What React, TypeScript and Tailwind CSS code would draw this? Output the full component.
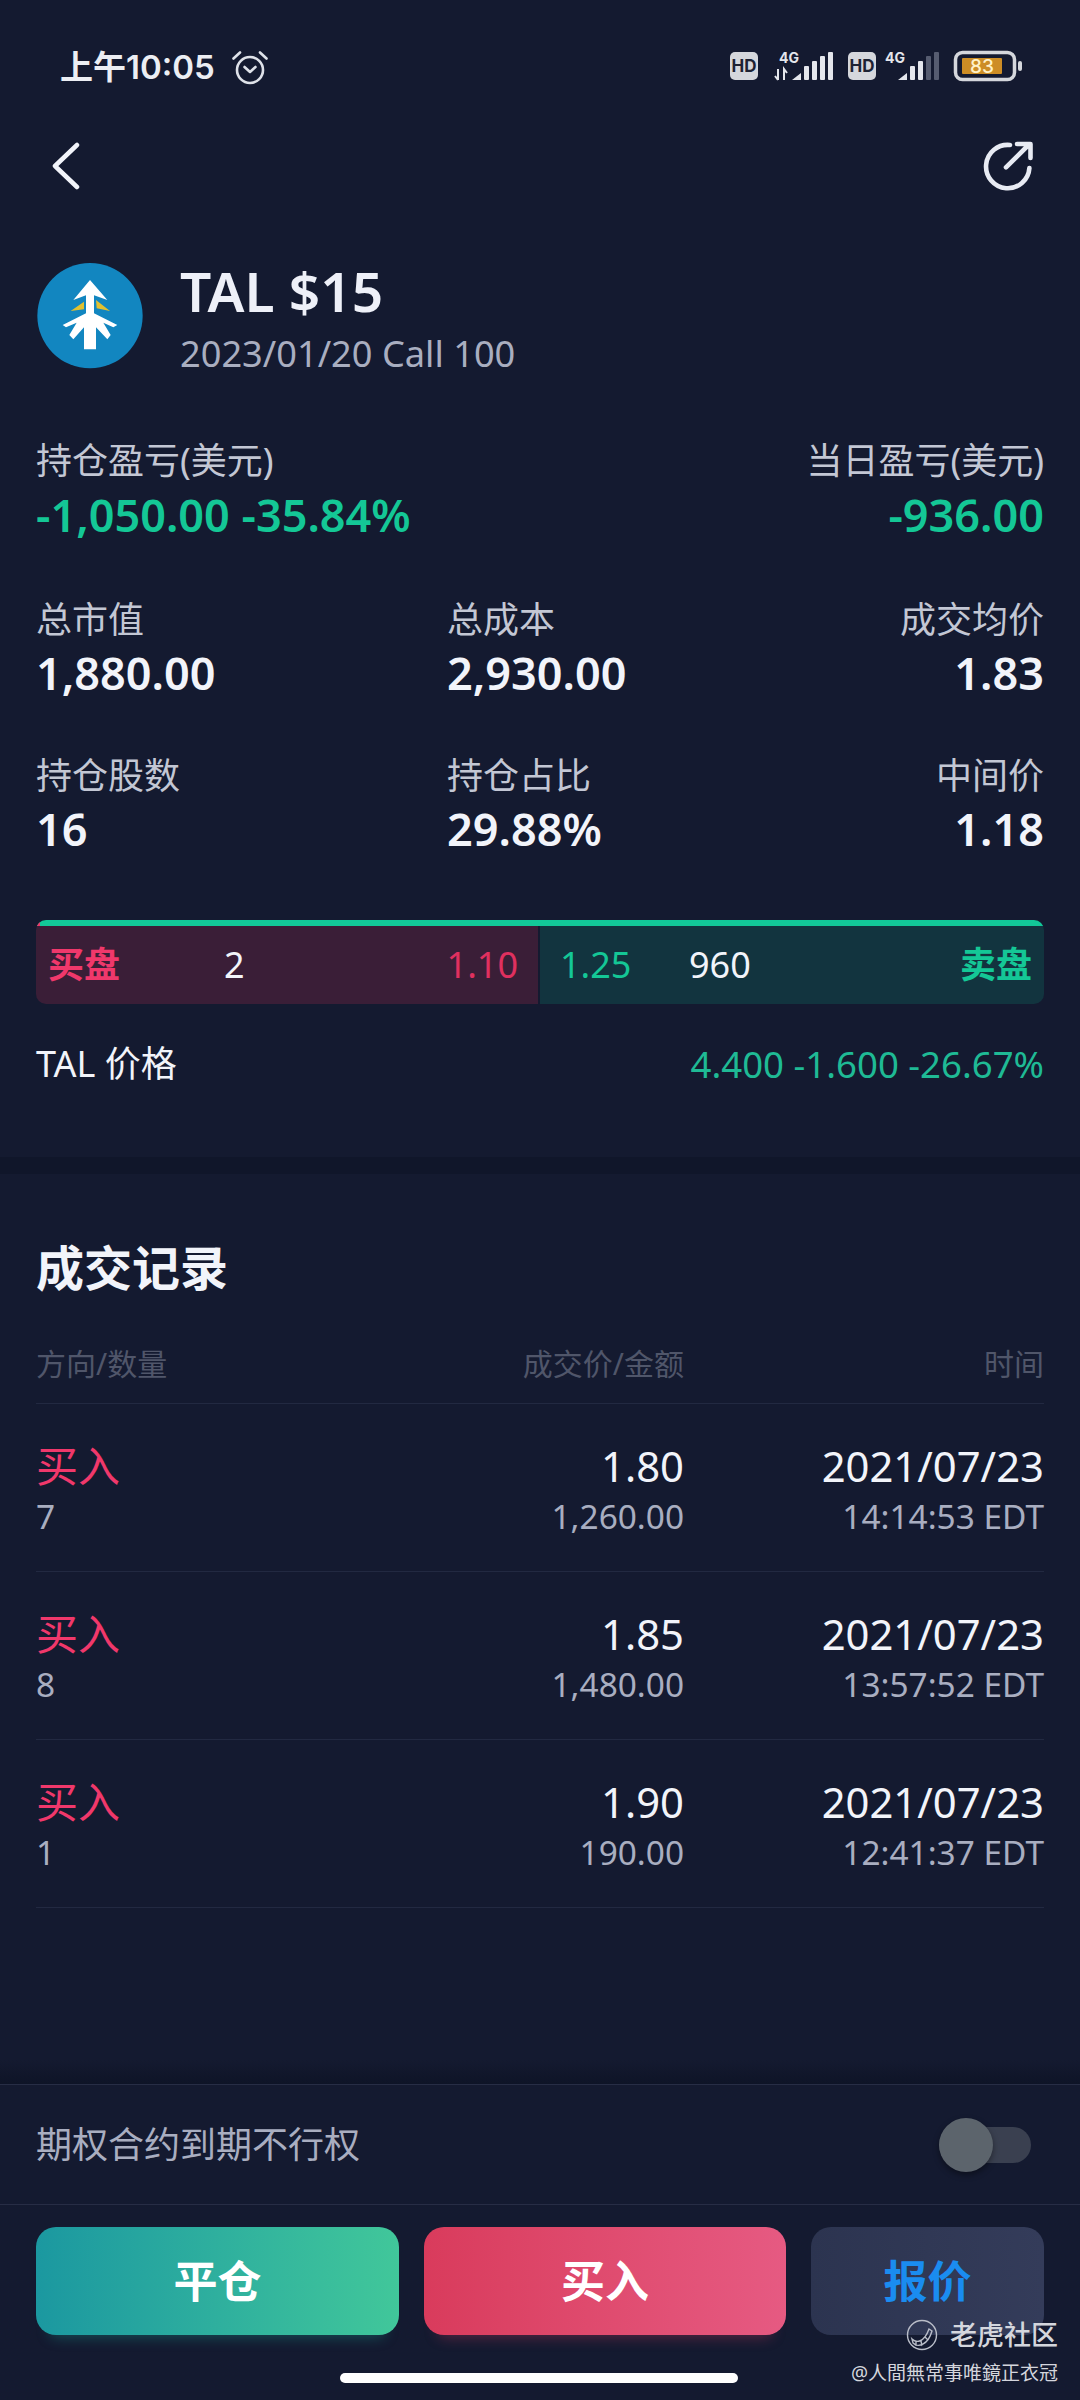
import React from 'react'

const trades = [
  { side: '买入', qty: '7', price: '1.80', amount: '1,260.00', date: '2021/07/23', time: '14:14:53 EDT' },
  { side: '买入', qty: '8', price: '1.85', amount: '1,480.00', date: '2021/07/23', time: '13:57:52 EDT' },
  { side: '买入', qty: '1', price: '1.90', amount: '190.00', date: '2021/07/23', time: '12:41:37 EDT' },
]

const stats = [
  [
    { label: '总市值', value: '1,880.00' },
    { label: '总成本', value: '2,930.00' },
    { label: '成交均价', value: '1.83' },
  ],
  [
    { label: '持仓股数', value: '16' },
    { label: '持仓占比', value: '29.88%' },
    { label: '中间价', value: '1.18' },
  ],
]

const Signal = (props: { dim?: boolean }) => {
  return (
    <g fill="#e4e6ec">
      <path d="M0 28 L9 21 V28 Z" />
      <rect x="12" y="14" width="5" height="14" rx="1" />
      <rect x="20" y="9" width="5" height="19" rx="1" />
      <rect x="28" y="4" width="5" height="24" rx="1" fill={props.dim ? '#565c70' : '#e4e6ec'} />
      <rect x="36" y="0" width="5" height="28" rx="1" fill={props.dim ? '#565c70' : '#e4e6ec'} />
    </g>
  )
}

const HdBadge = (props: { x: number }) => {
  return (
    <g transform={`translate(${props.x} 0)`}>
      <rect x="0" y="2" width="28" height="28" rx="5" fill="#d5d7dc" />
      <text x="14" y="22" textAnchor="middle" fontSize="17" fontWeight="700" fill="#1d2233" fontFamily="Inter, sans-serif">HD</text>
    </g>
  )
}

const StatusIcons = () => {
  return (
    <svg width="296" height="36" viewBox="0 0 296 36" fill="none">
      <HdBadge x={0} />
      <text x="49" y="13" fontSize="14" fontWeight="700" fill="#e4e6ec" fontFamily="Inter, sans-serif">4G</text>
      <path d="M48 19 V30 M45 26 L48 30 M54 30 V19 L57 23" stroke="#e4e6ec" strokeWidth="2" />
      <g transform="translate(62 2)"><Signal /></g>
      <HdBadge x={118} />
      <text x="155" y="13" fontSize="14" fontWeight="700" fill="#e4e6ec" fontFamily="Inter, sans-serif">4G</text>
      <g transform="translate(168 2)"><Signal dim /></g>
      <rect x="225.5" y="2.5" width="59" height="27" rx="7" stroke="#d5d7dc" strokeWidth="3.5" />
      <rect x="232" y="8" width="40" height="16" rx="1" fill="#cd8d25" />
      <text x="252" y="23" textAnchor="middle" fontSize="19" fontWeight="500" fill="#fff2c8" fontFamily="Inter, sans-serif">83</text>
      <rect x="288" y="11" width="4" height="10" rx="2" fill="#d5d7dc" />
    </svg>
  )
}

const AlarmIcon = () => {
  return (
    <svg width="36" height="36" viewBox="0 0 36 36" fill="none" stroke="#dfe2e9" strokeWidth="2.6" strokeLinecap="round" strokeLinejoin="round">
      <circle cx="18" cy="20" r="13" />
      <path d="M12.5 17 L18 22 L23.5 17" />
      <path d="M1.5 8.5 L8 2.5 M34.5 8.5 L28 2.5" />
    </svg>
  )
}

const TreeLogo = () => {
  return (
    <svg width="106" height="106" viewBox="51 39 318 318" className="shrink-0">
      <circle cx="210" cy="197" r="158" fill="#1286c0" />
      <path d="M210 90 L262 150 L222 136 L222 190 L292 225 L280 232 L250 218 L272 255 L262 268 L228 232 L228 298 L192 298 L192 232 L160 268 L148 255 L170 218 L138 232 L128 225 L198 190 L198 136 L160 150 Z" fill="#fff" />
      <path d="M152 183 L192 155 L192 178 Z M228 150 L270 183 L230 175 Z" fill="#e2c12f" />
    </svg>
  )
}

const App = () => {
  return (
    <div className="relative flex h-[2400px] w-[1080px] flex-col overflow-hidden bg-[#141a30] font-['Noto_Sans','Noto_Sans_CJK_SC',sans-serif] text-[#f2f4fa]">
      {/* status bar */}
      <div className="flex h-[130px] shrink-0 items-center justify-between pt-[5px] pl-[60px] pr-[54px]">
        <div className="flex items-center gap-[17px]">
          <span className="font-['Inter','Noto_Sans_CJK_SC',sans-serif] text-[33px] font-semibold text-[#eceef3]">上午10:05</span>
          <AlarmIcon />
        </div>
        <StatusIcons />
      </div>

      {/* nav */}
      <div className="flex h-[72px] shrink-0 items-center justify-between pl-[50px] pr-[46px]">
        <svg width="32" height="48" viewBox="0 0 32 48" fill="none" stroke="#f2f4fa" strokeWidth="4.5" strokeLinecap="round" strokeLinejoin="round">
          <path d="M27 3 L5 24 L27 45" />
        </svg>
        <svg width="52" height="52" viewBox="0 0 52 52" fill="none" stroke="#e8ebf3" strokeWidth="4.6" strokeLinecap="round" strokeLinejoin="round">
          <path d="M28 5 A21.7 21.7 0 1 0 47.4 28" />
          <path d="M24 27.3 L46 5.5 M35 4 H48.5 V18" />
        </svg>
      </div>

      {/* contract */}
      <div className="mt-[61px] flex h-[106px] shrink-0 items-center gap-[37px] px-[37px]">
        <TreeLogo />
        <div className="flex flex-col pt-[3px]">
          <span className="text-[55px] leading-[62px] font-semibold text-[#eef0f8]">TAL $15</span>
          <span className="mt-[8px] text-[36.2px] leading-[46px] text-[#a9aec0]">2023/01/20 Call 100</span>
        </div>
      </div>

      {/* P&L */}
      <div className="mt-[67px] flex shrink-0 justify-between px-[36px]">
        <div className="flex flex-col">
          <span className="text-[36px] leading-[50px] text-[#c3c7d4]">持仓盈亏(美元)</span>
          <span className="text-[45px] leading-[58px] font-semibold text-[#14c796]">-1,050.00 -35.84%</span>
        </div>
        <div className="flex flex-col items-end">
          <span className="text-[36px] leading-[50px] text-[#c3c7d4]">当日盈亏(美元)</span>
          <span className="text-[45px] leading-[58px] font-semibold text-[#14c796]">-936.00</span>
        </div>
      </div>

      <div className="mt-[51px] flex shrink-0 flex-col gap-[50px] px-[36px]">
        {stats.map((row) => (
          <div key={row[0].label} className="grid grid-cols-[411px_1fr_auto]">
            {row.map((cell, i) => (
              <div key={cell.label} className={i === 2 ? 'flex flex-col items-end' : 'flex flex-col'}>
                <span className="text-[36px] leading-[50px] text-[#c3c7d4]">{cell.label}</span>
                <span className="text-[45px] leading-[56px] font-semibold">{cell.value}</span>
              </div>
            ))}
          </div>
        ))}
      </div>

      {/* bid / ask */}
      <div className="mx-[36px] mt-[63px] flex h-[84px] shrink-0 flex-col overflow-hidden rounded-[10px]">
        <div className="flex h-[6px] shrink-0 bg-[#12c898]">
          <div className="w-[4px] bg-[#f0386b]" />
        </div>
        <div className="flex flex-1">
          <div className="flex w-[504px] items-center border-r-2 border-[#141a30] bg-[#3a1e37] pl-[12px] pr-[20px]">
            <span className="w-[176px] text-[36px] font-bold text-[#f0386b]">买盘</span>
            <span className="text-[36px] text-[#f2f4fa]">2</span>
            <span className="ml-auto text-[36px] text-[#e0305f]">1.10</span>
          </div>
          <div className="flex flex-1 items-center bg-[#12343f] pl-[20px] pr-[12px]">
            <span className="w-[129px] text-[36px] text-[#14c796]">1.25</span>
            <span className="text-[36px] text-[#f2f4fa]">960</span>
            <span className="ml-auto text-[36px] font-bold text-[#14c796]">卖盘</span>
          </div>
        </div>
      </div>

      <div className="mt-[35px] flex shrink-0 items-center justify-between px-[36px] text-[36.6px] leading-[50px]">
        <span className="text-[36px] text-[#f2f4fa]">TAL 价格</span>
        <span className="text-[#1fba95]">4.400 -1.600 -26.67%</span>
      </div>

      <div className="mt-[68px] h-[17px] shrink-0 bg-[#10162a]" />

      {/* trades */}
      <div className="mt-[62px] shrink-0 px-[36px]">
        <h2 className="text-[48px] leading-[64px] font-bold">成交记录</h2>
        <div className="mt-[44px] grid h-[60px] grid-cols-[300px_348px_1fr] items-start border-b border-[#222941] text-[30px] leading-[40px] text-[#50566a]">
          <span>方向/数量</span>
          <span className="text-right">成交价/金额</span>
          <span className="text-right">时间</span>
        </div>
        {trades.map((t) => (
          <div key={t.time} className="grid h-[168px] grid-cols-[300px_348px_1fr] border-b border-[#222941] pt-[36px]">
            <div className="flex flex-col">
              <span className="text-[42px] leading-[52px] text-[#f0386b]">{t.side}</span>
              <span className="text-[33.4px] leading-[48px] text-[#a9aec0]">{t.qty}</span>
            </div>
            <div className="flex flex-col items-end">
              <span className="text-[41.8px] leading-[52px]">{t.price}</span>
              <span className="text-[33.4px] leading-[48px] text-[#a9aec0]">{t.amount}</span>
            </div>
            <div className="flex flex-col items-end">
              <span className="text-[41.8px] leading-[52px]">{t.date}</span>
              <span className="text-[33.4px] leading-[48px] text-[#a9aec0]">{t.time}</span>
            </div>
          </div>
        ))}
      </div>

      {/* footer */}
      <div className="mt-auto shrink-0">
        <div className="h-[24px] bg-gradient-to-b from-[#141a30] to-[#0e1427]" />
        <div className="flex h-[121px] items-center justify-between border-y border-[#272d45] pl-[36px] pr-[49px]">
          <span className="text-[36px] text-[#a9aec0]">期权合约到期不行权</span>
          <div className="relative h-[36px] w-[92px] rounded-full bg-[#3a4050]">
            <div className="absolute top-[-9px] left-0 h-[54px] w-[54px] rounded-full bg-[#5c646c] shadow-[0_3px_6px_rgba(0,0,0,0.4)]" />
          </div>
        </div>
        <div className="flex gap-[25px] px-[36px] pt-[22px] pb-[65px]">
          <button className="flex h-[108px] w-[363px] items-center justify-center rounded-[20px] bg-gradient-to-r from-[#1b98a0] to-[#41c79a] text-[44px] font-bold text-white shadow-[0_16px_14px_-14px_rgba(27,180,160,0.35)]">平仓</button>
          <button className="flex h-[108px] w-[362px] items-center justify-center rounded-[20px] bg-gradient-to-r from-[#d93b5c] to-[#e65a82] text-[44px] font-bold text-white shadow-[0_16px_14px_-14px_rgba(230,60,100,0.35)]">买入</button>
          <button className="flex h-[108px] w-[233px] items-center justify-center rounded-[20px] bg-gradient-to-r from-[#2c3450] to-[#343c5a] text-[44px] font-bold text-[#1a8cf0]">报价</button>
        </div>
      </div>

      {/* home indicator */}
      <div className="absolute top-[2373px] left-[340px] h-[10px] w-[398px] rounded-full bg-white" />

      {/* watermark */}
      <div className="absolute top-[2316px] right-[22px] flex flex-col items-end">
        <div className="flex items-center gap-[12px]">
          <svg width="32" height="32" viewBox="0 0 32 32" fill="none" stroke="#b9bdc8" strokeWidth="1.4">
            <circle cx="16" cy="16" r="14.5" />
            <path d="M6 20 C10 24 18 24 23 10 L26 12 C22 26 12 29 7 24 Z M10 22 L10 27 M15 22 L16 27 M19 18 L22 21" />
          </svg>
          <span className="text-[27px] leading-[38px] font-medium text-[#d4d6dd]">老虎社区</span>
        </div>
        <span className="mt-[6px] text-[19px] leading-[26px] text-[#d4d6dd]">@人間無常事唯鏡正衣冠</span>
      </div>
    </div>
  )
}

export default App
